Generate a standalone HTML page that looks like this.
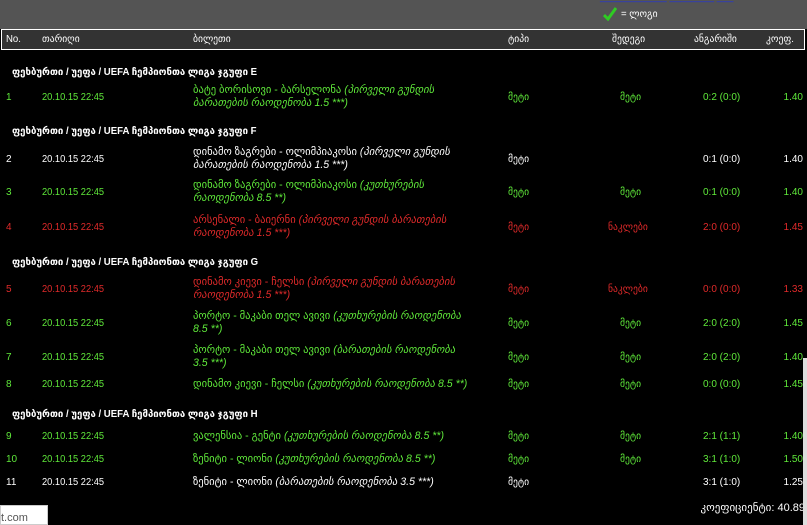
<!DOCTYPE html>
<html><head><meta charset="utf-8"><style>
*{margin:0;padding:0;box-sizing:border-box}
body{width:807px;height:525px;background:#000;overflow:hidden;position:relative;font-family:"Liberation Sans","DejaVu Sans",sans-serif;font-size:10px;color:#fff}
.top{position:absolute;left:0;top:0;width:807px;height:29px;background:#545454}
.hdr{position:absolute;left:1px;top:29px;width:804px;height:21px;background:#333;border:1px solid #fff}
.t{position:absolute;white-space:nowrap;transform-origin:0 50%;line-height:13px}
.s{transform:scaleX(.96)}
.k{font-size:11px;transform:scaleX(.96)}
.d{transform:scaleX(.93)}
.g{color:#5fe83a}.r{color:#e02a2a}.w{color:#fff}
i{font-style:italic}
.sec{font-weight:bold}
.rt{position:absolute;white-space:nowrap;line-height:13px;text-align:right}
</style></head><body>
<div class="top"></div>
<div class="t" style="left:600px;top:-9px;color:#2233dd">____________ ________ ___</div>
<svg style="position:absolute;left:603px;top:7px" width="14" height="14" viewBox="0 0 14 14"><path d="M1 8 L5 12 L13 1" stroke="#2ecc22" stroke-width="3" fill="none"/></svg>
<div class="t s" style="left:621px;top:8px">= ლოგი</div>
<div class="hdr"></div>
<div class="t s" style="left:6px;top:33px">No.</div>
<div class="t s" style="left:42px;top:33px">თარიღი</div>
<div class="t s" style="left:193px;top:33px">ბილეთი</div>
<div class="t s" style="left:508px;top:33px">ტიპი</div>
<div class="t s" style="left:612px;top:33px">შედეგი</div>
<div class="t s" style="left:694px;top:33px">ანგარიში</div>
<div class="t s" style="left:766px;top:33px">კოეფ.</div>

<div class="t s sec" style="left:12px;top:66px">ფეხბურთი / უეფა / UEFA ჩემპიონთა ლიგა ჯგუფი E</div>
<div class="t s sec" style="left:12px;top:125px">ფეხბურთი / უეფა / UEFA ჩემპიონთა ლიგა ჯგუფი F</div>
<div class="t s sec" style="left:12px;top:256px">ფეხბურთი / უეფა / UEFA ჩემპიონთა ლიგა ჯგუფი G</div>
<div class="t s sec" style="left:12px;top:408px">ფეხბურთი / უეფა / UEFA ჩემპიონთა ლიგა ჯგუფი H</div>

<div class="g">
<div class="t" style="left:6px;top:91px">1</div><div class="t d" style="left:42px;top:91px">20.10.15 22:45</div>
<div class="t k" style="left:193px;top:84px">ბატე ბორისოვი - ბარსელონა <i>(პირველი გუნდის</i><br><i>ბარათების რაოდენობა 1.5 ***)</i></div>
<div class="t s" style="left:508px;top:91px">მეტი</div><div class="t s" style="left:620px;top:91px">მეტი</div>
<div class="t" style="left:703px;top:91px">0:2 (0:0)</div><div class="rt" style="right:4px;top:91px">1.40</div>
</div>
<div class="w">
<div class="t" style="left:6px;top:153px">2</div><div class="t d" style="left:42px;top:153px">20.10.15 22:45</div>
<div class="t k" style="left:193px;top:146px">დინამო ზაგრები - ოლიმპიაკოსი <i>(პირველი გუნდის</i><br><i>ბარათების რაოდენობა 1.5 ***)</i></div>
<div class="t s" style="left:508px;top:153px">მეტი</div>
<div class="t" style="left:703px;top:153px">0:1 (0:0)</div><div class="rt" style="right:4px;top:153px">1.40</div>
</div>
<div class="g">
<div class="t" style="left:6px;top:186px">3</div><div class="t d" style="left:42px;top:186px">20.10.15 22:45</div>
<div class="t k" style="left:193px;top:179px">დინამო ზაგრები - ოლიმპიაკოსი <i>(კუთხურების</i><br><i>რაოდენობა 8.5 **)</i></div>
<div class="t s" style="left:508px;top:186px">მეტი</div><div class="t s" style="left:620px;top:186px">მეტი</div>
<div class="t" style="left:703px;top:186px">0:1 (0:0)</div><div class="rt" style="right:4px;top:186px">1.40</div>
</div>
<div class="r">
<div class="t" style="left:6px;top:221px">4</div><div class="t d" style="left:42px;top:221px">20.10.15 22:45</div>
<div class="t k" style="left:193px;top:214px">არსენალი - ბაიერნი <i>(პირველი გუნდის ბარათების</i><br><i>რაოდენობა 1.5 ***)</i></div>
<div class="t s" style="left:508px;top:221px">მეტი</div><div class="t s" style="left:608px;top:221px">ნაკლები</div>
<div class="t" style="left:703px;top:221px">2:0 (0:0)</div><div class="rt" style="right:4px;top:221px">1.45</div>
</div>
<div class="r">
<div class="t" style="left:6px;top:283px">5</div><div class="t d" style="left:42px;top:283px">20.10.15 22:45</div>
<div class="t k" style="left:193px;top:276px">დინამო კიევი - ჩელსი <i>(პირველი გუნდის ბარათების</i><br><i>რაოდენობა 1.5 ***)</i></div>
<div class="t s" style="left:508px;top:283px">მეტი</div><div class="t s" style="left:608px;top:283px">ნაკლები</div>
<div class="t" style="left:703px;top:283px">0:0 (0:0)</div><div class="rt" style="right:4px;top:283px">1.33</div>
</div>
<div class="g">
<div class="t" style="left:6px;top:317px">6</div><div class="t d" style="left:42px;top:317px">20.10.15 22:45</div>
<div class="t k" style="left:193px;top:310px">პორტო - მაკაბი თელ ავივი <i>(კუთხურების რაოდენობა</i><br><i>8.5 **)</i></div>
<div class="t s" style="left:508px;top:317px">მეტი</div><div class="t s" style="left:620px;top:317px">მეტი</div>
<div class="t" style="left:703px;top:317px">2:0 (2:0)</div><div class="rt" style="right:4px;top:317px">1.45</div>
</div>
<div class="g">
<div class="t" style="left:6px;top:351px">7</div><div class="t d" style="left:42px;top:351px">20.10.15 22:45</div>
<div class="t k" style="left:193px;top:344px">პორტო - მაკაბი თელ ავივი <i>(ბარათების რაოდენობა</i><br><i>3.5 ***)</i></div>
<div class="t s" style="left:508px;top:351px">მეტი</div><div class="t s" style="left:620px;top:351px">მეტი</div>
<div class="t" style="left:703px;top:351px">2:0 (2:0)</div><div class="rt" style="right:4px;top:351px">1.40</div>
</div>
<div class="g">
<div class="t" style="left:6px;top:378px">8</div><div class="t d" style="left:42px;top:378px">20.10.15 22:45</div>
<div class="t k" style="left:193px;top:378px">დინამო კიევი - ჩელსი <i>(კუთხურების რაოდენობა 8.5 **)</i></div>
<div class="t s" style="left:508px;top:378px">მეტი</div><div class="t s" style="left:620px;top:378px">მეტი</div>
<div class="t" style="left:703px;top:378px">0:0 (0:0)</div><div class="rt" style="right:4px;top:378px">1.45</div>
</div>
<div class="g">
<div class="t" style="left:6px;top:430px">9</div><div class="t d" style="left:42px;top:430px">20.10.15 22:45</div>
<div class="t k" style="left:193px;top:430px">ვალენსია - გენტი <i>(კუთხურების რაოდენობა 8.5 **)</i></div>
<div class="t s" style="left:508px;top:430px">მეტი</div><div class="t s" style="left:620px;top:430px">მეტი</div>
<div class="t" style="left:703px;top:430px">2:1 (1:1)</div><div class="rt" style="right:4px;top:430px">1.40</div>
</div>
<div class="g">
<div class="t" style="left:6px;top:453px">10</div><div class="t d" style="left:42px;top:453px">20.10.15 22:45</div>
<div class="t k" style="left:193px;top:453px">ზენიტი - ლიონი <i>(კუთხურების რაოდენობა 8.5 **)</i></div>
<div class="t s" style="left:508px;top:453px">მეტი</div><div class="t s" style="left:620px;top:453px">მეტი</div>
<div class="t" style="left:703px;top:453px">3:1 (1:0)</div><div class="rt" style="right:4px;top:453px">1.50</div>
</div>
<div class="w">
<div class="t" style="left:6px;top:476px">11</div><div class="t d" style="left:42px;top:476px">20.10.15 22:45</div>
<div class="t k" style="left:193px;top:476px">ზენიტი - ლიონი <i>(ბარათების რაოდენობა 3.5 ***)</i></div>
<div class="t s" style="left:508px;top:476px">მეტი</div>
<div class="t" style="left:703px;top:476px">3:1 (1:0)</div><div class="rt" style="right:4px;top:476px">1.25</div>
</div>
<div class="rt" style="right:2px;top:502px;font-size:11px">კოეფიციენტი: 40.89</div>
<div style="position:absolute;left:803px;top:358px;width:4px;height:167px;background:#ddd"></div>
<div style="position:absolute;left:0;top:505px;width:48px;height:20px;background:#fff;border:1px solid #ccc;color:#555;font-size:11px;padding:6px 0 0 0">t.com</div>
</body></html>
